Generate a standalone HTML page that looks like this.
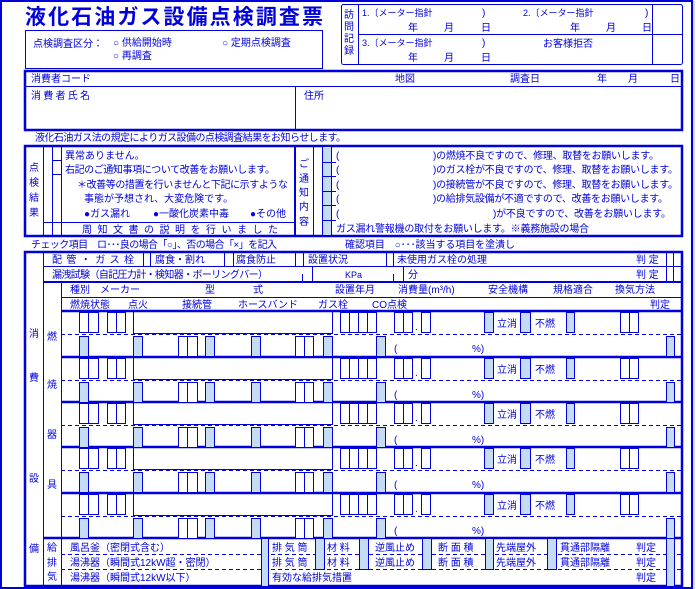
<!DOCTYPE html>
<html><head><meta charset="utf-8"><style>
html,body{margin:0;padding:0;background:#fff;width:696px;height:589px;overflow:hidden}
svg{display:block}
text{font-family:"Liberation Sans","Noto Sans CJK JP",sans-serif;font-size:10px;fill:#0000dd}
</style></head><body>
<svg width="696" height="589" viewBox="0 0 696 589" xmlns="http://www.w3.org/2000/svg">
<g fill="none" stroke="#0000dd" stroke-width="1">
<path d="M1 588 V1 H692 V589" stroke-width="2"/>
<line x1="694" y1="1" x2="694" y2="589" stroke="#b8b8b8"/>
<line x1="0" y1="588" x2="692" y2="588" stroke-width="2"/>
<rect x="25.5" y="30.5" width="297" height="38"/>
<rect x="341.5" y="4.5" width="341" height="60" rx="2"/>
<line x1="358.5" y1="4" x2="358.5" y2="65"/>
<line x1="652.5" y1="4" x2="652.5" y2="65"/>
<line x1="358" y1="34.5" x2="683" y2="34.5"/>
<rect x="25" y="71" width="657" height="59" stroke-width="2.5"/>
<line x1="25" y1="86.5" x2="682" y2="86.5"/>
<line x1="295.5" y1="86" x2="295.5" y2="130"/>
<rect x="25" y="146" width="657" height="90" stroke-width="2.5"/>
<line x1="43.5" y1="146" x2="43.5" y2="236"/>
<line x1="52.5" y1="146" x2="52.5" y2="236"/>
<line x1="61.5" y1="146" x2="61.5" y2="236"/>
<line x1="52" y1="160.5" x2="61" y2="160.5"/>
<line x1="52" y1="174.5" x2="61" y2="174.5"/>
<line x1="43" y1="222.5" x2="295" y2="222.5"/>
<line x1="295" y1="146" x2="295" y2="236" stroke-width="2"/>
<line x1="313.5" y1="146" x2="313.5" y2="236"/>
<line x1="322.5" y1="146" x2="322.5" y2="236"/>
<line x1="331.5" y1="146" x2="331.5" y2="236"/>
</g>
<rect x="323" y="147" width="8" height="88" fill="#c6dcf4"/>
<g stroke="#0000dd" stroke-width="1">
<line x1="322" y1="162.5" x2="336" y2="162.5"/><line x1="322" y1="176.5" x2="336" y2="176.5"/>
<line x1="322" y1="191.5" x2="336" y2="191.5"/><line x1="322" y1="205.5" x2="336" y2="205.5"/>
<line x1="322" y1="220.5" x2="336" y2="220.5"/>
<line x1="331.5" y1="146" x2="331.5" y2="236"/><line x1="322.5" y1="146" x2="322.5" y2="236"/>
</g>
<g fill="none" stroke="#0000dd" stroke-width="1">
<rect x="25" y="252" width="657" height="334" stroke-width="2.5"/>
<line x1="43.5" y1="252" x2="43.5" y2="586"/>
<line x1="43" y1="266.5" x2="682" y2="266.5"/>
<line x1="43" y1="282" x2="682" y2="282" stroke-width="2"/>
<line x1="61.5" y1="282" x2="61.5" y2="586"/>
<line x1="61" y1="297.5" x2="682" y2="297.5"/>
<line x1="61" y1="311" x2="682" y2="311" stroke-width="2.5"/>
<line x1="143.5" y1="252" x2="143.5" y2="266"/><line x1="150.5" y1="252" x2="150.5" y2="266"/>
<line x1="224.5" y1="252" x2="224.5" y2="266"/><line x1="233.5" y1="252" x2="233.5" y2="266"/>
<line x1="295.5" y1="252" x2="295.5" y2="266"/><line x1="303.5" y1="252" x2="303.5" y2="266"/>
<line x1="386.5" y1="252" x2="386.5" y2="266"/><line x1="393.5" y1="252" x2="393.5" y2="266"/>
<line x1="666.5" y1="252" x2="666.5" y2="282"/><line x1="673.5" y1="252" x2="673.5" y2="282"/>
<line x1="302.5" y1="274" x2="302.5" y2="282"/><line x1="312.5" y1="266" x2="312.5" y2="282"/>
<line x1="393.5" y1="274" x2="393.5" y2="282"/><line x1="403.5" y1="266" x2="403.5" y2="282"/>
<line x1="61" y1="357" x2="682" y2="357" stroke-width="2.5"/>
<line x1="61" y1="402" x2="682" y2="402" stroke-width="2.5"/>
<line x1="61" y1="447" x2="682" y2="447" stroke-width="2.5"/>
<line x1="61" y1="493" x2="682" y2="493" stroke-width="2.5"/>
<line x1="43" y1="538" x2="682" y2="538" stroke-width="2.5"/>
<g stroke-dasharray="4,3">
<line x1="61" y1="334.5" x2="682" y2="334.5"/><line x1="61" y1="380.5" x2="682" y2="380.5"/>
<line x1="61" y1="425.5" x2="682" y2="425.5"/><line x1="61" y1="470.5" x2="682" y2="470.5"/>
<line x1="61" y1="516.5" x2="682" y2="516.5"/>
<line x1="61" y1="554.5" x2="682" y2="554.5"/><line x1="61" y1="569.5" x2="682" y2="569.5"/>
</g>
</g>
<g stroke="#0000dd" stroke-width="1" fill="#fff" id="blocks">
</g>
<script>
(function(){
var ns="http://www.w3.org/2000/svg",g=document.getElementById('blocks');
function R(x,y,w,h,fill,divs){var r=document.createElementNS(ns,'rect');r.setAttribute('x',x+.5);r.setAttribute('y',y+.5);r.setAttribute('width',w);r.setAttribute('height',h);r.setAttribute('fill',fill?'#c6dcf4':'#fff');g.appendChild(r);(divs||[]).forEach(function(d){var l=document.createElementNS(ns,'line');l.setAttribute('x1',d+.5);l.setAttribute('x2',d+.5);l.setAttribute('y1',y);l.setAttribute('y2',y+h);g.appendChild(l);});}
function P(d){var p=document.createElementNS(ns,'path');p.setAttribute('d',d);p.setAttribute('fill','none');g.appendChild(p);}
[311,357,402,447,493].forEach(function(y0){
R(79,y0+1,19,20,0,[88]);R(107,y0+1,18,20,0,[116]);
P('M133.5 '+(y0+1)+' V'+(y0+22.5)+' H332.5 V'+(y0+1));
R(340,y0+1,36,20,0,[349,358,367]);R(394,y0+1,18,20,0,[403]);R(421,y0+1,9,20,0);
R(484,y0+1,9,20,1);R(520,y0+1,10,20,1);R(566,y0+1,8,20,1);R(620,y0+1,18,20,0,[629]);
var b=y0+25;R(79,b,9,20,1);R(133,b,9,20,1);R(178,b,19,20,0,[187]);R(205,b,9,20,1);
R(251,b,9,20,1);R(295,b,18,20,0,[304]);R(323,b,9,20,1);R(376,b,9,20,1);R(666,b,8,20,1);
});
R(261,538,7,48,1);R(315,538,9,31,1);R(359,538,9,31,1);R(422,538,9,31,1);R(485,538,8,31,1);R(547,538,9,31,1);R(666,538,8,48,1);
})();
</script>
<text x="25" y="24" style="font-size:21px;font-weight:bold" textLength="298">液化石油ガス設備点検調査票</text>
<text x="33" y="47">点検調査区分：</text>
<text x="113" y="46">○ 供給開始時</text>
<text x="222" y="46">○ 定期点検調査</text>
<text x="113" y="59">○ 再調査</text>
<text x="344" y="18">訪</text><text x="344" y="30">問</text>
<text x="344" y="42">記</text><text x="344" y="54">録</text>
<text x="362" y="16" style="font-size:9px">1.〔メーター指針</text><text x="482" y="16">)</text>
<text x="523" y="16" style="font-size:9px">2.〔メーター指針</text><text x="645" y="16">)</text>
<text x="408" y="31">年</text><text x="444" y="31">月</text><text x="481" y="31">日</text>
<text x="570" y="31">年</text><text x="606" y="31">月</text><text x="642" y="31">日</text>
<text x="362" y="46" style="font-size:9px">3.〔メーター指針</text><text x="482" y="46">)</text>
<text x="543" y="47">お客様拒否</text>
<text x="408" y="61">年</text><text x="444" y="61">月</text><text x="481" y="61">日</text>
<text x="31" y="82">消費者コード</text>
<text x="395" y="82">地図</text><text x="510" y="82">調査日</text>
<text x="597" y="82">年</text><text x="628" y="82">月</text><text x="670" y="82">日</text>
<text x="31" y="99" textLength="59">消費者氏名</text><text x="304" y="99">住所</text>
<text x="35" y="141" textLength="311">液化石油ガス法の規定によりガス設備の点検調査結果をお知らせします。</text>
<text x="29" y="171">点</text><text x="29" y="186">検</text><text x="29" y="201">結</text><text x="29" y="216">果</text>
<text x="65" y="159">異常ありません。</text>
<text x="65" y="173" textLength="210">右記のご通知事項について改善をお願いします。</text>
<text x="77" y="188" textLength="211">＊改善等の措置を行いませんと下記に示すような</text>
<text x="84" y="202">事態が予想され、大変危険です。</text>
<text x="84" y="217">●ガス漏れ</text><text x="153" y="217">●一酸化炭素中毒</text><text x="250" y="217">●その他</text>
<text x="82" y="233" textLength="196">周知文書の説明を行いました</text>
<text x="299" y="167">ご</text><text x="299" y="182">通</text><text x="299" y="196">知</text><text x="299" y="210">内</text><text x="299" y="225">容</text>
<text x="336" y="159">(</text><text x="433" y="159" textLength="226">)の燃焼不良ですので、修理、取替をお願いします。</text>
<text x="336" y="173">(</text><text x="433" y="173" textLength="245">)のガス栓が不良ですので、修理、取替をお願いします。</text>
<text x="336" y="188">(</text><text x="433" y="188" textLength="245">)の接続管が不良ですので、修理、取替をお願いします。</text>
<text x="336" y="202">(</text><text x="433" y="202" textLength="235">)の給排気設備が不適ですので、改善をお願いします。</text>
<text x="336" y="217">(</text><text x="493" y="217" textLength="178">)が不良ですので、改善をお願いします。</text>
<text x="336" y="232" textLength="253">ガス漏れ警報機の取付をお願いします。※義務施設の場合</text>
<text x="31" y="248" textLength="246">チェック項目　ロ･･･良の場合「○」、否の場合「×」を記入</text>
<text x="345" y="248" textLength="170">確認項目　○･･･該当する項目を塗潰し</text>
<text x="52" y="263" textLength="82">配管・ガス栓</text>
<text x="155" y="263">腐食・割れ</text><text x="236" y="263">腐食防止</text>
<text x="308" y="263">設置状況</text><text x="397" y="263">未使用ガス栓の処理</text><text x="636" y="263">判 定</text>
<text x="52" y="278" textLength="216">漏洩試験（自記圧力計・検知器・ボーリングバー）</text>
<text x="345" y="278" style="font-size:9px">KPa</text><text x="408" y="278">分</text><text x="636" y="278">判 定</text>
<text x="70" y="293">種別</text><text x="100" y="293">メーカー</text><text x="205" y="293">型</text><text x="253" y="293">式</text>
<text x="335" y="293">設置年月</text><text x="398" y="293">消費量(m³/h)</text><text x="488" y="293">安全機構</text>
<text x="553" y="293">規格適合</text><text x="615" y="293">換気方法</text>
<text x="70" y="308">燃焼状態</text><text x="128" y="308">点火</text><text x="182" y="308">接続管</text>
<text x="238" y="308">ホースバンド</text><text x="318" y="308">ガス栓</text><text x="372" y="308">CO点検</text>
<text x="650" y="308">判定</text>
<g>
<text x="497" y="327">立消</text><text x="535" y="327">不燃</text><text x="415" y="330">.</text><text x="394" y="352">(</text><text x="472" y="352">%)</text>
<text x="497" y="373">立消</text><text x="535" y="373">不燃</text><text x="415" y="376">.</text><text x="394" y="398">(</text><text x="472" y="398">%)</text>
<text x="497" y="418">立消</text><text x="535" y="418">不燃</text><text x="415" y="421">.</text><text x="394" y="443">(</text><text x="472" y="443">%)</text>
<text x="497" y="463">立消</text><text x="535" y="463">不燃</text><text x="415" y="466">.</text><text x="394" y="488">(</text><text x="472" y="488">%)</text>
<text x="497" y="509">立消</text><text x="535" y="509">不燃</text><text x="415" y="512">.</text><text x="394" y="534">(</text><text x="472" y="534">%)</text>
</g>
<text x="29" y="337">消</text><text x="29" y="381">費</text><text x="29" y="482">設</text><text x="29" y="552">備</text>
<text x="47" y="340">燃</text><text x="47" y="388">焼</text><text x="47" y="438">器</text><text x="47" y="488">具</text>
<text x="47" y="551">給</text><text x="47" y="566">排</text><text x="47" y="580">気</text>
<text x="70" y="551">風呂釜（密閉式含む）</text>
<text x="70" y="566">湯沸器（瞬間式12kW超・密閉）</text>
<text x="70" y="581">湯沸器（瞬間式12kW以下）</text>
<text x="272" y="551">排 気 筒</text><text x="272" y="566">排 気 筒</text><text x="272" y="581">有効な給排気措置</text>
<text x="327" y="551">材 料</text><text x="327" y="566">材 料</text>
<text x="375" y="551">逆風止め</text><text x="375" y="566">逆風止め</text>
<text x="438" y="551">断 面 積</text><text x="438" y="566">断 面 積</text>
<text x="496" y="551">先端屋外</text><text x="496" y="566">先端屋外</text>
<text x="560" y="551">貫通部隔離</text><text x="560" y="566">貫通部隔離</text>
<text x="636" y="551">判定</text><text x="636" y="566">判定</text><text x="636" y="581">判定</text>
</svg>
</body></html>
